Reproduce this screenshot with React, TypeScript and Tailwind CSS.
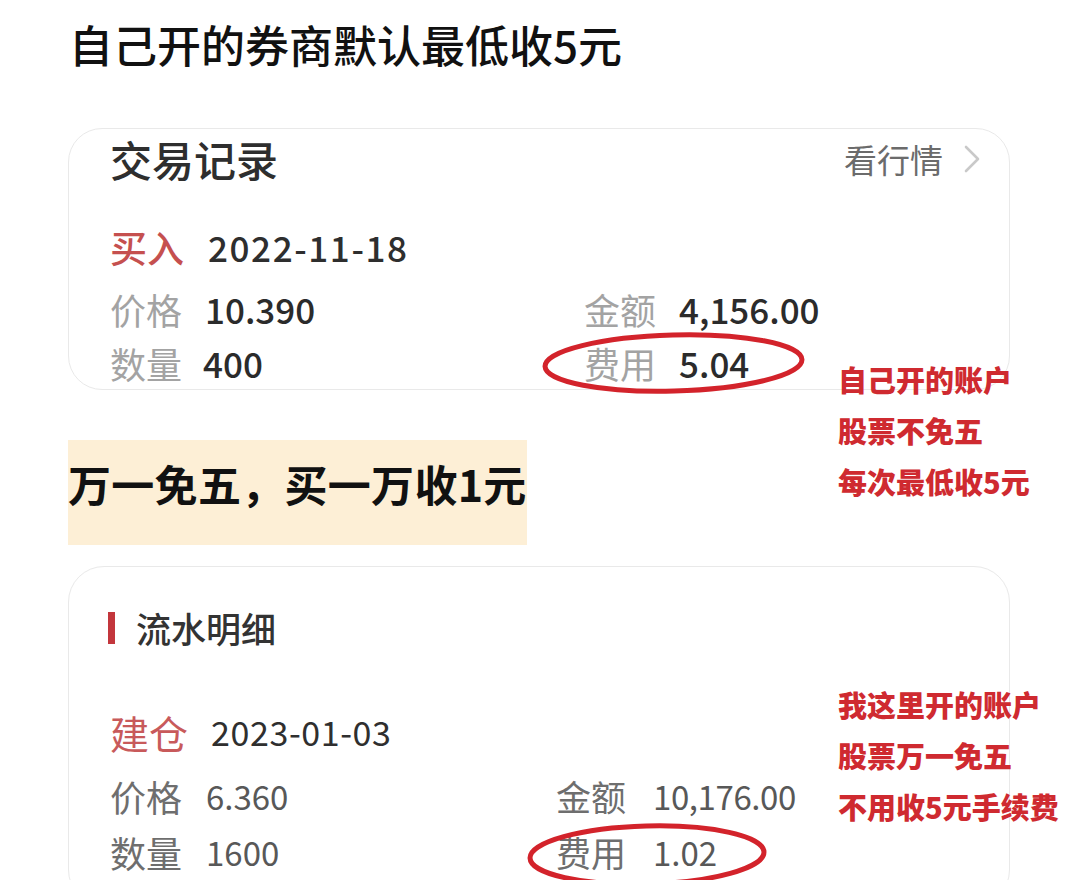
import React from 'react';

const FONT = { fontFamily: '"Noto Sans CJK SC", "Noto Sans", sans-serif' };

interface FieldProps {
  label: string;
  value: string;
  labelClass: string;
  valueClass: string;
  labelWidth: string;
}

const Field: React.FC<FieldProps> = ({ label, value, labelClass, valueClass, labelWidth }) => (
  <div className="flex items-center">
    <span className={`${labelWidth} shrink-0 ${labelClass}`}>{label}</span>
    <span className={valueClass}>{value}</span>
  </div>
);

const Ellipse: React.FC<{ className: string; w: number; h: number }> = ({ className, w, h }) => (
  <svg className={className} width={w} height={h} viewBox={`0 0 ${w} ${h}`} fill="none">
    <ellipse
      cx={w / 2}
      cy={h / 2}
      rx={w / 2 - 4}
      ry={h / 2 - 4}
      stroke="#d3232b"
      strokeWidth="5"
      transform={`rotate(-1.5 ${w / 2} ${h / 2})`}
    />
  </svg>
);

const Note: React.FC<{ lines: string[]; className: string }> = ({ lines, className }) => (
  <div className={`absolute left-[838px] flex flex-col gap-[22px] ${className}`}>
    {lines.map((line) => (
      <p key={line} className="text-[29px] leading-[29px] font-black text-[#cf2a30] whitespace-nowrap">
        {line}
      </p>
    ))}
  </div>
);

export default function App() {
  return (
    <div className="relative w-[1080px] h-[880px] overflow-hidden bg-white" style={FONT}>
      <h1 className="pt-[22px] pl-[69px] text-[44px] leading-[44px] font-medium text-[#111]">
        自己开的券商默认最低收5元
      </h1>

      {/* trade record card */}
      <div className="relative mt-[62px] ml-[68px] w-[942px] h-[262px] rounded-[34px] border border-[#e9e9e9] pl-[41px] pr-[28px]">
        <div className="flex items-center justify-between pt-[9px]">
          <span className="text-[42px] leading-[42px] font-medium text-[#2e2e2e]">交易记录</span>
          <span className="flex items-center gap-[20px] text-[33px] leading-[33px] text-[#6b6b6b]">
            看行情
            <svg width="18" height="28" viewBox="0 0 18 28" fill="none">
              <path d="M3 2 L15 14 L3 26" stroke="#c9c9c9" strokeWidth="2.6" strokeLinecap="round" strokeLinejoin="round" />
            </svg>
          </span>
        </div>
        <div className="mt-[47px] flex items-center h-[40px]">
          <span className="w-[98px] text-[37px] leading-[40px] font-medium text-[#c5504f]">买入</span>
          <span className="text-[35px] leading-[40px] font-medium tracking-[1.6px] text-[#2e2e2e]">2022-11-18</span>
        </div>
        <div className="mt-[22px] grid grid-cols-[474px_1fr] h-[40px]">
          <Field label="价格" value="10.390" labelWidth="w-[95px]" labelClass="text-[36px] leading-[40px] text-[#a3a3a3]" valueClass="text-[35px] leading-[40px] font-medium text-[#2b2b2b]" />
          <Field label="金额" value="4,156.00" labelWidth="w-[95px]" labelClass="text-[36px] leading-[40px] text-[#a3a3a3]" valueClass="text-[35px] leading-[40px] font-medium text-[#2b2b2b]" />
        </div>
        <div className="mt-[14px] grid grid-cols-[474px_1fr] h-[40px]">
          <Field label="数量" value="400" labelWidth="w-[93px]" labelClass="text-[36px] leading-[40px] text-[#a3a3a3]" valueClass="text-[35px] leading-[40px] font-medium text-[#2b2b2b]" />
          <Field label="费用" value="5.04" labelWidth="w-[95px]" labelClass="text-[36px] leading-[40px] text-[#a3a3a3]" valueClass="text-[35px] leading-[40px] font-medium text-[#2b2b2b]" />
        </div>
        <Ellipse className="absolute left-[472px] top-[202px]" w={265} h={64} />
      </div>

      <Note className="top-[365px]" lines={['自己开的账户', '股票不免五', '每次最低收5元']} />

      {/* highlight */}
      <div className="mt-[50px] ml-[68px] w-fit h-[105px] bg-[#fdefd6] pt-[21px]">
        <p className="text-[43px] leading-[44px] font-bold tracking-[0.3px] text-[#111] whitespace-nowrap">万一免五，买一万收1元</p>
      </div>

      {/* flow detail card */}
      <div className="relative mt-[21px] ml-[68px] w-[942px] h-[340px] rounded-[36px] border border-[#e9e9e9] pl-[41px]">
        <div className="flex items-center pt-[40px] h-[82px]">
          <span className="w-[7px] h-[32px] bg-[#c3363c] ml-[-2px]" />
          <span className="ml-[21px] text-[35px] leading-[40px] font-medium text-[#333]">流水明细</span>
        </div>
        <div className="mt-[63px] flex items-center h-[40px]">
          <span className="w-[101px] text-[39px] leading-[40px] text-[#c85a5b]">建仓</span>
          <span className="text-[34px] leading-[40px] tracking-[0.6px] text-[#2f2f2f]">2023-01-03</span>
        </div>
        <div className="mt-[24px] grid grid-cols-[446px_1fr] h-[40px]">
          <Field label="价格" value="6.360" labelWidth="w-[96px]" labelClass="text-[36px] leading-[40px] text-[#6e6e6e]" valueClass="text-[33px] leading-[40px] text-[#585858]" />
          <Field label="金额" value="10,176.00" labelWidth="w-[97px]" labelClass="text-[35px] leading-[40px] text-[#6e6e6e]" valueClass="text-[33px] leading-[40px] tracking-[-0.4px] text-[#585858]" />
        </div>
        <div className="mt-[16px] grid grid-cols-[446px_1fr] h-[40px]">
          <Field label="数量" value="1600" labelWidth="w-[96px]" labelClass="text-[36px] leading-[40px] text-[#6e6e6e]" valueClass="text-[33px] leading-[40px] text-[#585858]" />
          <Field label="费用" value="1.02" labelWidth="w-[97px]" labelClass="text-[35px] leading-[40px] text-[#6e6e6e]" valueClass="text-[33px] leading-[40px] text-[#585858]" />
        </div>
        <Ellipse className="absolute left-[457px] top-[255px]" w={242} h={66} />
      </div>

      <Note className="top-[690px]" lines={['我这里开的账户', '股票万一免五', '不用收5元手续费']} />
    </div>
  );
}
